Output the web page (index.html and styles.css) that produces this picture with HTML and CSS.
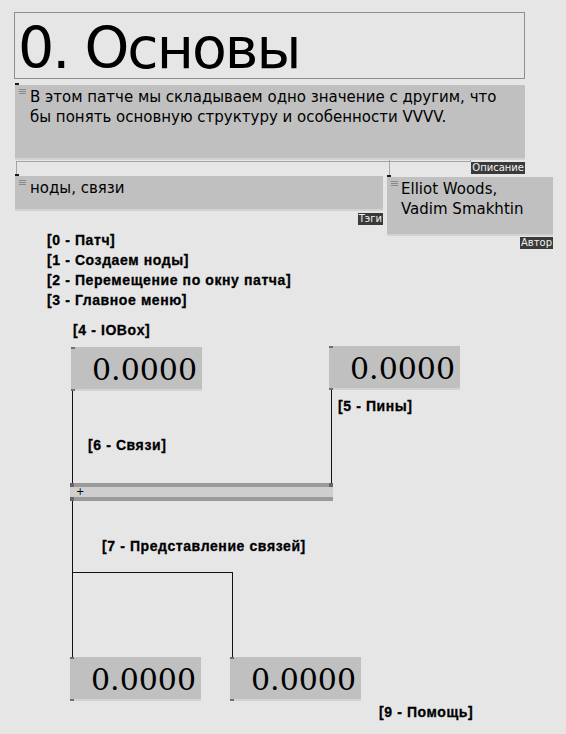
FILE: index.html
```html
<!DOCTYPE html>
<html lang="ru">
<head>
<meta charset="utf-8">
<title>0. Основы</title>
<link rel="stylesheet" href="styles.css">
</head>
<body>
<div class="patch">
  <svg class="links" width="566" height="734" viewBox="0 0 566 734">
    <g class="string-links">
      <polyline points="16.5,176 16.5,161.5 470.5,161.5 470.5,159"/>
      <line x1="389.5" y1="159" x2="389.5" y2="175"/>
    </g>
    <g class="value-links">
      <line x1="72.5" y1="391" x2="72.5" y2="483"/>
      <line x1="331.5" y1="390" x2="331.5" y2="483"/>
      <polyline points="72.5,501 72.5,657"/>
      <polyline points="72.5,572.5 232.5,572.5 232.5,657"/>
    </g>
  </svg>

  <div class="title">0. Основы</div>

  <div class="textbox tb-desc">
    <span class="pin"></span>
    <svg class="grip" width="7" height="6" viewBox="0 0 7 6"><path d="M0 0.5H7M0 2.5H7M0 4.5H7"/></svg>
    <div class="tb-text">В этом патче мы складываем одно значение с другим, что<br>бы понять основную структуру и особенности VVVV.</div>
    <span class="tag">Описание</span>
  </div>

  <div class="textbox tb-tags">
    <span class="pin"></span>
    <svg class="grip" width="7" height="6" viewBox="0 0 7 6"><path d="M0 0.5H7M0 2.5H7M0 4.5H7"/></svg>
    <div class="tb-text">ноды, связи</div>
    <span class="tag">Тэги</span>
  </div>

  <div class="textbox tb-author">
    <span class="pin"></span>
    <svg class="grip" width="7" height="6" viewBox="0 0 7 6"><path d="M0 0.5H7M0 2.5H7M0 4.5H7"/></svg>
    <div class="tb-text">Elliot Woods,<br>Vadim Smakhtin</div>
    <span class="tag">Автор</span>
  </div>

  <ul class="chapters">
    <li>[0 - Патч]</li>
    <li>[1 - Создаем ноды]</li>
    <li>[2 - Перемещение по окну патча]</li>
    <li>[3 - Главное меню]</li>
  </ul>

  <div class="label lb-iobox">[4 - IOBox]</div>
  <div class="label lb-pins">[5 - Пины]</div>
  <div class="label lb-links">[6 - Связи]</div>
  <div class="label lb-view">[7 - Представление связей]</div>
  <div class="label lb-help">[9 - Помощь]</div>

  <div class="iobox io-a">0.0000</div>
  <div class="iobox io-b">0.0000</div>
  <div class="iobox io-c">0.0000</div>
  <div class="iobox io-d">0.0000</div>

  <div class="addnode">
    <span class="apin apin-tl"></span>
    <span class="apin apin-tr"></span>
    <span class="apin apin-bl"></span>
    <span class="plus">+</span>
  </div>
</div>
</body>
</html>
```

FILE: styles.css
```css
html, body {
  margin: 0;
  padding: 0;
  background: #e6e6e6;
}

.patch {
  position: relative;
  width: 566px;
  height: 734px;
  overflow: hidden;
  background: #e6e6e6;
  color: #000;
}

.links {
  position: absolute;
  left: 0;
  top: 0;
  shape-rendering: crispEdges;
}
.links .string-links * {
  fill: none;
  stroke: #a4a4a4;
  stroke-width: 1;
}
.links .value-links * {
  fill: none;
  stroke: #111;
  stroke-width: 1;
}

/* title */
.title {
  position: absolute;
  left: 14px;
  top: 12px;
  width: 511px;
  height: 67px;
  box-sizing: border-box;
  border: 1px solid #8e8e8e;
  padding: 3px 0 0 3px;
  font-family: "DejaVu Sans", sans-serif;
  font-size: 57px;
  line-height: 64px;
  letter-spacing: -2px;
  white-space: nowrap;
}

/* string text boxes */
.textbox {
  position: absolute;
  box-sizing: border-box;
  background: #c0c0c0;
  box-shadow: inset 0 -2px 0 #d2d2d2;
  padding: 2px 6px 0 15px;
  font-family: "DejaVu Sans", sans-serif;
  font-size: 15px;
  line-height: 20px;
}
.tb-text { white-space: nowrap; }
.textbox .pin {
  position: absolute;
  left: 0;
  top: -2px;
  width: 4px;
  height: 2px;
  background: #1a1a1a;
}
.textbox .grip {
  position: absolute;
  left: 4px;
  top: 4px;
}
.textbox .grip path {
  stroke: #8a8a8a;
  stroke-width: 1;
  fill: none;
}
.textbox .tag {
  position: absolute;
  right: 0;
  top: calc(100% + 2px);
  background: #3a3a3a;
  color: #f2f2f2;
  font-size: 10px;
  line-height: 12px;
  padding: 0 1px;
}

.tb-desc { left: 15px; top: 85px; width: 510px; height: 75px; }
.tb-tags { left: 15px; top: 176px; width: 368px; height: 35px; }
.tb-author { left: 387px; top: 177px; width: 166px; height: 59px; padding-left: 14px; }
.tb-author .tag { top: calc(100% + 1px); }

/* bold comment labels */
.chapters, .label {
  font-family: "Liberation Sans", Arial, sans-serif;
  font-weight: bold;
  font-size: 14px;
  line-height: 20px;
  letter-spacing: 0.6px;
  -webkit-text-stroke: 0.3px #000;
  white-space: nowrap;
}
.chapters {
  position: absolute;
  left: 47px;
  top: 230px;
  margin: 0;
  padding: 0;
  list-style: none;
}
.label { position: absolute; }
.lb-iobox { left: 73px; top: 320px; }
.lb-pins { left: 338px; top: 396px; }
.lb-links { left: 88px; top: 435px; }
.lb-view { left: 102px; top: 536px; }
.lb-help { left: 379px; top: 702px; }

/* value IOBoxes */
.iobox {
  position: absolute;
  box-sizing: border-box;
  width: 131px;
  height: 44px;
  background: #c0c0c0;
  box-shadow: inset 0 -2px 0 #d2d2d2;
  padding: 2px 5px 0 0;
  text-align: right;
  font-family: "DejaVu Serif", serif;
  font-size: 30px;
  line-height: 42px;
}
.iobox::before,
.iobox::after {
  content: "";
  position: absolute;
  left: 0;
  width: 4px;
  height: 2px;
  background: #707070;
}
.iobox::before { top: 0; }
.iobox::after { bottom: 0; }

.io-a { left: 71px; top: 347px; }
.io-b { left: 329px; top: 346px; }
.io-c { left: 70px; top: 657px; }
.io-d { left: 230px; top: 657px; }

/* + node */
.addnode {
  position: absolute;
  left: 70px;
  top: 483px;
  width: 263px;
  height: 18px;
  box-sizing: border-box;
  background: #cecece;
  border-top: 4px solid #9a9a9a;
  border-bottom: 4px solid #9a9a9a;
}
.apin {
  position: absolute;
  width: 4px;
  height: 4px;
  background: #666;
}
.apin-tl { left: 0; top: -4px; }
.apin-tr { right: 0; top: -4px; }
.apin-bl { left: 0; bottom: -4px; }
.plus {
  position: absolute;
  left: 6px;
  top: -1px;
  color: #000;
  font-family: "DejaVu Sans", sans-serif;
  font-size: 10px;
  line-height: 12px;
}
```
